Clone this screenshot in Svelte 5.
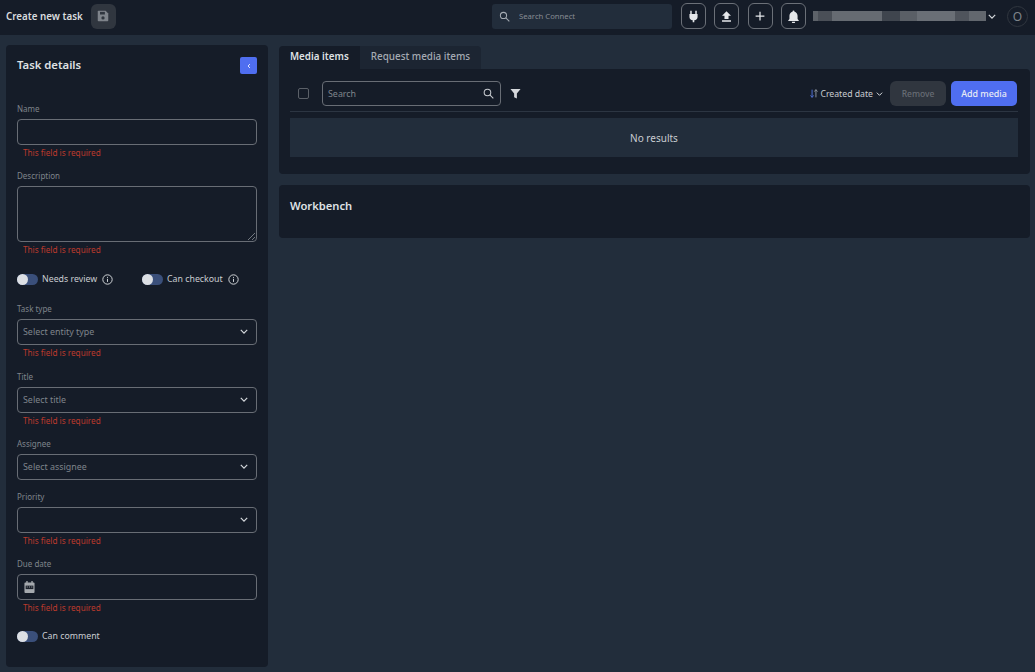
<script>
  const required = 'This field is required';

  const sortIcon = 'M4 2v10M2 9.500 4 12l2-2.500M9 12V2M7 4.500 9 2l2 2.500';
</script>

<div class="page">
  <header class="topbar">
    <div class="title">Create new task</div>
    <button class="save" aria-label="Save">
      <svg viewBox="0 0 16 16" width="12" height="12"><path fill="#7f848b" d="M2 1h9.500L15 4.500V14a1 1 0 0 1-1 1H2a1 1 0 0 1-1-1V2a1 1 0 0 1 1-1z"/><rect x="4" y="2.500" width="6.500" height="3.500" fill="#30363f"/><circle cx="8" cy="10.500" r="2.200" fill="#30363f"/></svg>
    </button>
    <div class="spacer"></div>
    <div class="global-search">
      <svg viewBox="0 0 16 16" width="11" height="11" fill="none" stroke="#a5abb3" stroke-width="1.500"><circle cx="6.500" cy="6.500" r="4.500"/><path d="m10 10 5 5"/></svg>
      <span>Search Connect</span>
    </div>
    <button class="icon-btn" aria-label="Connect">
      <svg viewBox="0 0 16 16" width="13" height="13" fill="#e6e8eb"><path d="M4 1h1.800v4h4.400V1H12v4h1v3.500c0 2.200-1.700 3.800-4 4V15H7v-2.500c-2.300-.2-4-1.800-4-4V5h1z"/></svg>
    </button>
    <button class="icon-btn" aria-label="Upload">
      <svg viewBox="0 0 16 16" width="13" height="13" fill="#e6e8eb"><path d="M8 1.500 13.500 7H10.500v4h-5V7H2.500zM2.500 12.500h11V14.500h-11z"/></svg>
    </button>
    <button class="icon-btn" aria-label="Add">
      <svg viewBox="0 0 16 16" width="10" height="10" fill="none" stroke="#e6e8eb" stroke-width="2"><path d="M8 1v14M1 8h14"/></svg>
    </button>
    <button class="icon-btn" aria-label="Notifications">
      <svg viewBox="0 0 16 16" width="13" height="13" fill="#e6e8eb"><path d="M8 0.500a1.200 1.200 0 0 1 1.200 1.200v.5C11.500 2.800 13 4.800 13 7.200V11l1.500 1.800v.7h-13v-.7L3 11V7.200C3 4.800 4.500 2.800 6.800 2.200v-.5A1.200 1.200 0 0 1 8 .5zM6 14.500h4a2 2 0 0 1-4 0z"/></svg>
    </button>
    <div class="user">
      <div class="redacted"></div>
      <svg class="user-chevron" viewBox="0 0 10 6" width="8" height="5" fill="none" stroke="#d5d8dc" stroke-width="1.500"><path d="m1 1 4 4 4-4"/></svg>
    </div>
    <div class="avatar">O</div>
  </header>

  <div class="content">
    <aside class="sidebar">
      <div class="side-head">
        <h2>Task details</h2>
        <button class="collapse" aria-label="Collapse">
          <svg viewBox="0 0 6 8" width="4" height="6" fill="none" stroke="#fff" stroke-width="1.200"><path d="M4.500 1 1.500 4l3 3"/></svg>
        </button>
      </div>

      <div class="field first">
        <div class="label">Name</div>
        <div class="control"></div>
        <div class="error">{required}</div>
      </div>

      <div class="field desc">
        <div class="label">Description</div>
        <div class="control area">
          <svg class="grip" viewBox="0 0 8 8" width="8" height="8" fill="none" stroke="#8a9097" stroke-width="0.800"><path d="M1 8 8 1M5 8l3-3"/></svg>
        </div>
        <div class="error">{required}</div>
      </div>

      <div class="toggles">
        <div class="toggle-item wide">
          <span class="toggle"></span><span>Needs review</span>
          <svg viewBox="0 0 16 16" width="11" height="11" fill="none" stroke="#d5d8dc" stroke-width="1.400"><circle cx="8" cy="8" r="6.800"/><path d="M8 7v4.500M8 4.200v1.400"/></svg>
        </div>
        <div class="toggle-item">
          <span class="toggle"></span><span>Can checkout</span>
          <svg viewBox="0 0 16 16" width="11" height="11" fill="none" stroke="#d5d8dc" stroke-width="1.400"><circle cx="8" cy="8" r="6.800"/><path d="M8 7v4.500M8 4.200v1.400"/></svg>
        </div>
      </div>

      <div class="field type">
        <div class="label">Task type</div>
        <div class="control select"><span>Select entity type</span><svg viewBox="0 0 10 6" width="8" height="5" fill="none" stroke="#d5d8dc" stroke-width="1.500"><path d="m1 1 4 4 4-4"/></svg></div>
        <div class="error">{required}</div>
      </div>

      <div class="field title-field">
        <div class="label">Title</div>
        <div class="control select"><span>Select title</span><svg viewBox="0 0 10 6" width="8" height="5" fill="none" stroke="#d5d8dc" stroke-width="1.500"><path d="m1 1 4 4 4-4"/></svg></div>
        <div class="error">{required}</div>
      </div>

      <div class="field">
        <div class="label">Assignee</div>
        <div class="control select"><span>Select assignee</span><svg viewBox="0 0 10 6" width="8" height="5" fill="none" stroke="#d5d8dc" stroke-width="1.500"><path d="m1 1 4 4 4-4"/></svg></div>
      </div>

      <div class="field">
        <div class="label">Priority</div>
        <div class="control select"><span></span><svg viewBox="0 0 10 6" width="8" height="5" fill="none" stroke="#d5d8dc" stroke-width="1.500"><path d="m1 1 4 4 4-4"/></svg></div>
        <div class="error">{required}</div>
      </div>

      <div class="field">
        <div class="label">Due date</div>
        <div class="control date">
          <svg viewBox="0 0 12 13" width="11" height="12"><path fill="#a5a9ae" d="M2.500 0h1.500v1.500h4V0h1.500v1.500h1A1 1 0 0 1 11.500 2.500v9.500a1 1 0 0 1-1 1h-9a1 1 0 0 1-1-1V2.500a1 1 0 0 1 1-1h1z"/><rect x="1.800" y="5" width="8.400" height="3.800" fill="#1d232d"/><path fill="#a5a9ae" d="M3 6h1v1H3zM5.500 6h1v1h-1zM8 6h1v1H8z"/></svg>
        </div>
        <div class="error">{required}</div>
      </div>

      <div class="toggle-item comment">
        <span class="toggle"></span><span>Can comment</span>
      </div>
    </aside>

    <main class="main">
      <div class="tabs">
        <div class="tab active">Media items</div>
        <div class="tab">Request media items</div>
      </div>
      <section class="media">
        <div class="toolbar">
          <span class="checkbox"></span>
          <div class="search">
            <span>Search</span>
            <svg viewBox="0 0 16 16" width="11" height="11" fill="none" stroke="#c9ccd1" stroke-width="1.500"><circle cx="6.500" cy="6.500" r="4.800"/><path d="m10 10 5 5"/></svg>
          </div>
          <svg class="funnel" viewBox="0 0 12 12" width="11" height="11" fill="#d5d8dc"><path d="M0.500 1h11L7.500 6v5.500L4.500 10V6z"/></svg>
          <div class="spacer"></div>
          <div class="sort">
            <svg class="sort-icon" viewBox="0 0 13 14" width="10" height="11" fill="none" stroke-width="1.300"><path stroke="#4f6fcf" d={sortIcon.split('M9')[0]}/><path stroke="#8a9097" d={'M9' + sortIcon.split('M9')[1]}/></svg>
            <span>Created date</span>
            <svg viewBox="0 0 10 6" width="7" height="4" fill="none" stroke="#d5d8dc" stroke-width="1.500"><path d="m1 1 4 4 4-4"/></svg>
          </div>
          <button class="remove">Remove</button>
          <button class="add">Add media</button>
        </div>
        <div class="empty">No results</div>
      </section>

      <section class="workbench">
        <h3>Workbench</h3>
      </section>
    </main>
  </div>
</div>

<style>
  :global(body) {
    margin: 0;
    background: #222d3b;
    font-family: 'Noto Sans', sans-serif;
    color: #d5d8dc;
  }

  .page {
    width: 1035px;
    height: 672px;
    overflow: hidden;
    display: flex;
    flex-direction: column;
  }

  button {
    font-family: inherit;
    padding: 0;
  }

  .topbar {
    height: 35px;
    flex: none;
    background: #151c28;
    display: flex;
    align-items: center;
    padding: 0 7px 3px 6px;
    box-sizing: border-box;
  }

  .title {
    font-size: 9.800px;
    font-weight: 600;
    color: #d9dbde;
  }

  .save {
    width: 25px;
    height: 25px;
    margin-left: 8px;
    border: none;
    border-radius: 6px;
    background: #30363f;
    display: flex;
    align-items: center;
    justify-content: center;
  }

  .spacer {
    flex: 1;
  }

  .global-search {
    width: 180px;
    height: 25px;
    border-radius: 3px;
    background: #222d3b;
    display: flex;
    align-items: center;
    padding-left: 7px;
    box-sizing: border-box;
    gap: 9px;
    font-size: 7.700px;
    color: #878c93;
  }

  .icon-btn {
    width: 25px;
    height: 26px;
    margin-left: 8.500px;
    border: 1px solid #6b7078;
    border-radius: 6px;
    background: #151c28;
    display: flex;
    align-items: center;
    justify-content: center;
  }

  .user {
    display: flex;
    align-items: center;
    margin-left: 7px;
  }

  .redacted {
    width: 173px;
    height: 10px;
    background: linear-gradient(90deg, #5d6269 0 3%, #4a4f57 3% 11%, #666b72 11% 40%, #3f454e 40% 50%, #5a5f66 50% 60%, #6a6f76 60% 82%, #4f545c 82% 90%, #62676e 90% 100%);
  }

  .user-chevron {
    margin-left: 2px;
  }

  .avatar {
    width: 21px;
    height: 21px;
    margin-left: 11px;
    border-radius: 50%;
    border: 1px solid #30363f;
    box-sizing: border-box;
    display: flex;
    align-items: center;
    justify-content: center;
    font-size: 12px;
    color: #7f848b;
  }

  .content {
    flex: 1;
    display: flex;
    gap: 11px;
    padding: 10px 5px 5px 6px;
    min-height: 0;
  }

  .sidebar {
    width: 262px;
    flex: none;
    box-sizing: border-box;
    background: #151c28;
    border-radius: 4px;
    padding: 0 11px;
    display: flex;
    flex-direction: column;
  }

  .side-head {
    height: 52px;
    display: flex;
    justify-content: space-between;
    align-items: flex-start;
    flex: none;
  }

  .side-head h2 {
    margin: 11px 0 0;
    font-size: 11.300px;
    line-height: 18px;
    font-weight: 600;
    color: #dfe1e4;
  }

  .collapse {
    width: 17px;
    height: 17px;
    margin-top: 12px;
    border: none;
    border-radius: 2px;
    background: #4f6ef0;
    display: flex;
    align-items: center;
    justify-content: center;
  }

  .field {
    margin-top: 11.500px;
    flex: none;
  }

  .field.first {
    margin-top: 6px;
  }

  .field.desc {
    margin-top: 11px;
  }

  .field.type {
    margin-top: 17px;
  }

  .field.title-field {
    margin-top: 12.500px;
  }

  .label {
    height: 12px;
    line-height: 12px;
    font-size: 8px;
    color: #7f848b;
    margin-bottom: 4px;
  }

  .control {
    height: 25.500px;
    box-sizing: border-box;
    border: 1px solid #686d75;
    border-radius: 4px;
  }

  .control.area {
    height: 56px;
    position: relative;
  }

  .grip {
    position: absolute;
    right: 1px;
    bottom: 1px;
  }

  .select {
    display: flex;
    align-items: center;
    justify-content: space-between;
    padding: 0 8px 0 5px;
    font-size: 8.900px;
    color: #7f848b;
  }

  .date {
    display: flex;
    align-items: center;
    padding-left: 6px;
  }

  .error {
    height: 12px;
    line-height: 12px;
    margin-top: 2px;
    padding-left: 6px;
    font-size: 8.200px;
    color: #bd3a2c;
  }

  .toggles {
    display: flex;
    margin-top: 16.500px;
    flex: none;
  }

  .toggle-item {
    display: flex;
    align-items: center;
    gap: 4px;
    font-size: 8.800px;
    height: 14px;
    color: #c9ccd1;
  }

  .toggle-item.wide {
    width: 125px;
  }

  .toggle-item svg {
    margin-left: 1px;
  }

  .toggle-item.comment {
    margin-top: 15.500px;
    flex: none;
  }

  .toggle {
    position: relative;
    width: 21px;
    height: 11px;
    border-radius: 6px;
    background: #3a4f7a;
    flex: none;
  }

  .toggle::after {
    content: '';
    position: absolute;
    left: 0;
    top: 0;
    width: 11px;
    height: 11px;
    border-radius: 50%;
    background: #dcdfe4;
  }

  .main {
    flex: 1;
    min-width: 0;
    display: flex;
    flex-direction: column;
  }

  .tabs {
    display: flex;
    height: 23px;
    margin-top: 1px;
    flex: none;
  }

  .tab {
    padding: 0 11px;
    line-height: 21px;
    font-size: 9.900px;
    font-weight: 500;
    color: #a5abb3;
    background: #1c2532;
    border-radius: 0 4px 0 0;
  }

  .tab.active {
    background: #151c28;
    color: #dfe1e4;
    font-size: 9.800px;
    font-weight: 600;
    border-radius: 4px 0 0 0;
  }

  .media {
    height: 105px;
    background: #151c28;
    border-radius: 0 4px 4px 4px;
    padding: 0 12px 0 11px;
    box-sizing: border-box;
    flex: none;
  }

  .toolbar {
    height: 43px;
    padding: 6px 1px 0 0;
    border-bottom: 1px solid #2c3542;
    display: flex;
    align-items: center;
    box-sizing: border-box;
  }

  .checkbox {
    width: 9px;
    height: 9px;
    margin-left: 8px;
    border: 1px solid #5b6068;
    border-radius: 2px;
  }

  .search {
    width: 179px;
    height: 25px;
    box-sizing: border-box;
    margin-left: 13px;
    border: 1px solid #686d75;
    border-radius: 4px;
    display: flex;
    align-items: center;
    justify-content: space-between;
    padding: 0 6px 0 5px;
    font-size: 8.900px;
    color: #7f848b;
  }

  .funnel {
    margin-left: 9px;
  }

  .sort {
    display: flex;
    align-items: center;
    gap: 3px;
    font-size: 8.700px;
    line-height: 14px;
    padding-top: 1px;
    color: #c9ccd1;
    margin-right: 7px;
  }

  .sort-icon {
    margin-right: -2px;
  }

  .remove {
    width: 56px;
    height: 25px;
    border: none;
    border-radius: 6px;
    background: #30363f;
    color: #686d75;
    font-size: 8.500px;
    font-weight: 500;
  }

  .add {
    width: 66px;
    height: 25px;
    margin-left: 5px;
    border: none;
    border-radius: 5px;
    background: #4f6ef0;
    color: #e8ebf5;
    font-size: 8.900px;
    font-weight: 500;
  }

  .empty {
    height: 39px;
    margin-top: 6px;
    background: #222d3b;
    display: flex;
    align-items: center;
    justify-content: center;
    font-size: 10px;
    color: #c9ccd1;
  }

  .workbench {
    height: 53px;
    margin-top: 11px;
    background: #151c28;
    border-radius: 4px;
    padding: 12px 11px;
    box-sizing: border-box;
    flex: none;
  }

  .workbench h3 {
    margin: 0;
    font-size: 11.200px;
    line-height: 18px;
    font-weight: 600;
    color: #dfe1e4;
  }
</style>
